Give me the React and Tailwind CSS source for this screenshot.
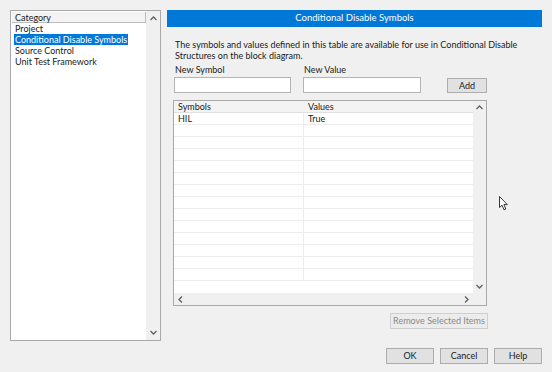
import React from "react";

const font = { fontFamily: "Lato, 'Noto Sans', sans-serif" };

function Up() {
  return (
    <svg width="7" height="5" viewBox="0 0 7 5"><path d="M0.5 4 L3.5 1 L6.5 4" fill="none" stroke="#606060" strokeWidth="1.3" /></svg>
  );
}
function Down() {
  return (
    <svg width="7" height="5" viewBox="0 0 7 5"><path d="M0.5 1 L3.5 4 L6.5 1" fill="none" stroke="#606060" strokeWidth="1.3" /></svg>
  );
}
function Left() {
  return (
    <svg width="5" height="7" viewBox="0 0 5 7"><path d="M4 0.5 L1 3.5 L4 6.5" fill="none" stroke="#606060" strokeWidth="1.3" /></svg>
  );
}
function Right() {
  return (
    <svg width="5" height="7" viewBox="0 0 5 7"><path d="M1 0.5 L4 3.5 L1 6.5" fill="none" stroke="#606060" strokeWidth="1.3" /></svg>
  );
}

function Btn({ children, className = "", disabled }) {
  return (
    <div className={`flex items-center justify-center border ${disabled ? "border-[#cfcfcf] bg-[#ececec] text-[#8a8a8a]" : "border-[#adadad] bg-[#e1e1e1] text-[#1a1a1a]"} ${className}`}>
      {children}
    </div>
  );
}

export default function App() {
  const rows = Array.from({ length: 14 });
  return (
    <div className="relative w-[552px] h-[372px] bg-[#f0f0f0] flex text-[9px] text-[#1a1a1a] overflow-hidden" style={font}>
      {/* left list */}
      <div className="pl-[10px] pt-[10px]">
        <div className="w-[151px] h-[331px] border border-[#a9a9a9] bg-white flex">
          <div className="flex-1 flex flex-col pl-[1px] pt-[1px]">
            <div className="h-[11px] leading-[11px] pl-[3px] bg-[#f3f3f3] border-r border-b border-[#bdbdbd]">Category</div>
            <div className="h-[11px] leading-[11px] pl-[3px]">Project</div>
            <div className="h-[11px] leading-[11px] pl-[2px]"><span className="bg-[#0078d7] text-white px-[1px] inline-block whitespace-nowrap">Conditional Disable Symbols</span></div>
            <div className="h-[11px] leading-[11px] pl-[3px]">Source Control</div>
            <div className="h-[11px] leading-[11px] pl-[3px]">Unit Test Framework</div>
          </div>
          <div className="w-[14px] bg-[#f0f0f0] flex flex-col items-center justify-between py-[5px]">
            <Up />
            <Down />
          </div>
        </div>
      </div>

      {/* right panel */}
      <div className="ml-[6px] pt-[10px] w-[375px] flex flex-col">
        <div className="h-[17px] bg-[#0078d7] text-white text-[9.5px] flex items-center justify-center">Conditional Disable Symbols</div>
        <div className="pl-[8px] pt-[12px] leading-[11px] w-[360px]">
          The symbols and values defined in this table are available for use in Conditional Disable Structures on the block diagram.
        </div>
        <div className="flex pl-[7px] pt-[3px]">
          <div className="flex flex-col w-[129px]">
            <div className="h-[12px] leading-[12px] pl-[1px]">New Symbol</div>
            <div className="mt-[1px] w-[117px] h-[16px] bg-white border border-[#b4b4b4]"></div>
          </div>
          <div className="flex flex-col w-[144px]">
            <div className="h-[12px] leading-[12px] pl-[1px]">New Value</div>
            <div className="mt-[1px] w-[118px] h-[16px] bg-white border border-[#b4b4b4]"></div>
          </div>
          <div className="flex flex-col">
            <div className="h-[14px]"></div>
            <Btn className="w-[40px] h-[15px]">Add</Btn>
          </div>
        </div>
        {/* table */}
        <div className="ml-[6px] mt-[7px] w-[314px] h-[206px] border border-[#a9a9a9] bg-white flex flex-col">
          <div className="flex flex-1 min-h-0">
            <div className="flex-1 flex flex-col overflow-hidden">
              <div className="flex h-[12px] leading-[12px] bg-[#f3f3f3] border-b border-[#e0e0e0]">
                <div className="w-[130px] pl-[4px]">Symbols</div>
                <div className="flex-1 pl-[4px]">Values</div>
              </div>
              {rows.map((_, i) => (
                <div key={i} className="flex h-[12px] leading-[11px] border-b border-[#ededed] shrink-0">
                  <div className="w-[130px] pl-[4px] border-r border-[#ededed]">{i === 0 ? "HIL" : ""}</div>
                  <div className="flex-1 pl-[4px]">{i === 0 ? "True" : ""}</div>
                </div>
              ))}
            </div>
            <div className="w-[13px] bg-[#f0f0f0] flex flex-col items-center justify-between pt-[4px] pb-[4px]">
              <Up />
              <Down />
            </div>
          </div>
          <div className="h-[12px] flex">
            <div className="flex-1 bg-[#f0f0f0] flex items-center justify-between px-[4px]">
              <Left />
              <Right />
            </div>
            <div className="w-[13px] bg-[#f0f0f0]"></div>
          </div>
        </div>
        <div className="flex justify-end pr-[54px] mt-[7px]">
          <Btn disabled className="w-[98px] h-[16px]">Remove Selected Items</Btn>
        </div>
        <div className="flex justify-end gap-[6px] mt-[19px] pr-[0px]">
          <Btn className="w-[48px] h-[16px]">OK</Btn>
          <Btn className="w-[48px] h-[16px]">Cancel</Btn>
          <Btn className="w-[48px] h-[16px]">Help</Btn>
        </div>
      </div>

      {/* mouse cursor */}
      <svg className="absolute left-[499px] top-[196px]" width="10" height="15" viewBox="0 0 10 15">
        <path d="M0.5 0.5 L0.5 11.5 L3 9.2 L5 13.8 L6.8 13 L4.9 8.6 L8.3 8.6 Z" fill="white" stroke="#222" strokeWidth="0.9" strokeLinejoin="round" />
      </svg>
    </div>
  );
}
